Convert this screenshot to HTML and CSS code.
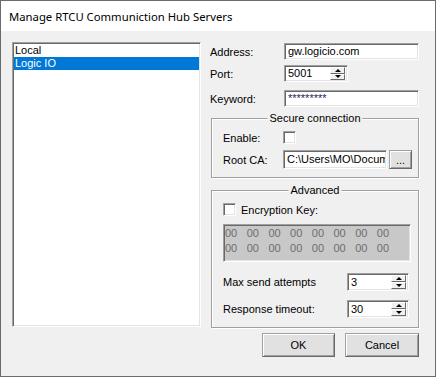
FILE: index.html
```html
<!DOCTYPE html>
<html>
<head>
<meta charset="utf-8">
<link rel="stylesheet" href="styles.css">
</head>
<body>
<div class="window">
  <div class="titlebar">Manage RTCU Communiction Hub Servers</div>
  <div class="body">
    <div class="main">
      <div class="listbox">
        <div class="item">Local</div>
        <div class="item selected">Logic IO</div>
      </div>
      <div class="panel">
        <div class="row r-address"><span class="label">Address:</span><div class="textbox wide">gw.logicio.com</div></div>
        <div class="row r-port"><span class="label">Port:</span>
          <div class="textbox spin port"><span class="val">5001</span><span class="spinbtns"><span class="sb up"></span><span class="sb down"></span></span></div>
        </div>
        <div class="row r-keyword"><span class="label">Keyword:</span><div class="textbox wide pw">*********</div></div>

        <div class="group secure">
          <div class="group-title">Secure connection</div>
          <div class="grow enable"><span class="glabel">Enable:</span><span class="checkbox"></span></div>
          <div class="grow rootca"><span class="glabel">Root CA:</span><div class="textbox path"><span class="clip">C:\Users\MO\Docum</span></div><button class="btn small">...</button></div>
        </div>

        <div class="group advanced">
          <div class="group-title">Advanced</div>
          <div class="grow enc"><span class="checkbox"></span><span class="enc-label">Encryption Key:</span></div>
          <div class="textbox keybox">00 00 00 00 00 00 00 00<br>00 00 00 00 00 00 00 00</div>
          <div class="grow num r-max"><span class="nlabel">Max send attempts</span>
            <div class="textbox spin nspin"><span class="val">3</span><span class="spinbtns"><span class="sb up"></span><span class="sb down"></span></span></div>
          </div>
          <div class="grow num r-resp"><span class="nlabel">Response timeout:</span>
            <div class="textbox spin nspin"><span class="val">30</span><span class="spinbtns"><span class="sb up"></span><span class="sb down"></span></span></div>
          </div>
        </div>
      </div>
    </div>
    <div class="buttons">
      <button class="btn ok">OK</button>
      <button class="btn cancel">Cancel</button>
    </div>
  </div>
</div>
</body>
</html>
```
FILE: styles.css
```css
* { box-sizing: border-box; }
body {
  margin: 0;
  font-family: "Liberation Sans", Arial, sans-serif;
  font-size: 11px;
  color: #000;
}
.window {
  width: 436px;
  height: 377px;
  border: 1px solid #6b6b6b;
  background: #f0f0f0;
  display: flex;
  flex-direction: column;
}
.titlebar {
  height: 30px;
  flex: none;
  background: #fff;
  padding-left: 8px;
  display: flex;
  align-items: center;
  font-family: "Noto Sans", sans-serif;
  font-size: 11.3px;
  color: #000;
}
.body {
  flex: 1;
  padding: 11px 16px 0 11px;
  display: flex;
  flex-direction: column;
}
.main {
  display: flex;
  align-items: flex-start;
}
.listbox {
  width: 189px;
  height: 285px;
  background: #fff;
  border: 1px solid;
  border-color: #a0a0a0 #fff #fff #a0a0a0;
  box-shadow: inset 1px 1px #696969, inset -1px -1px #e3e3e3;
  padding: 1px;
}
.item {
  height: 13px;
  line-height: 13px;
  padding-left: 1px;
  white-space: nowrap;
}
.item.selected {
  background: #0078d7;
  color: #fff;
}
.panel {
  margin-left: 9px;
  width: 209px;
  padding-top: 1px;
  display: flex;
  flex-direction: column;
}
.row {
  display: flex;
  align-items: center;
  height: 17px;
}
.r-port { margin-top: 5px; }
.r-keyword { margin-top: 8px; }
.label { width: 74px; flex: none; }
.textbox {
  height: 17px;
  background: #fff;
  border: 1px solid;
  border-color: #a0a0a0 #fff #fff #a0a0a0;
  box-shadow: inset 1px 1px #696969, inset -1px -1px #e3e3e3;
  padding: 0 3px;
  line-height: 15px;
  overflow: hidden;
  white-space: nowrap;
}
.wide { width: 135px; }
.pw { color: #1b2a5a; }
.spin {
  display: flex;
  align-items: stretch;
  padding: 1px 2px 1px 3px;
  line-height: 13px;
}
.spin .val { flex: 1; }
.port { width: 64px; height: 17px; }
.spinbtns {
  width: 15px;
  display: flex;
  flex-direction: column;
}
.sb {
  flex: 1;
  background: #f0f0f0;
  border: 1px solid;
  border-color: #fff #696969 #696969 #fff;
  display: flex;
  align-items: center;
  justify-content: center;
}
.sb::after {
  content: "";
  width: 0;
  height: 0;
  border-left: 3px solid transparent;
  border-right: 3px solid transparent;
}
.sb.up::after { border-bottom: 3px solid #000; }
.sb.down::after { border-top: 3px solid #000; }

.group {
  position: relative;
  margin-left: 1px;
  width: 208px;
  border: 1px solid #a0a0a0;
  box-shadow: inset 1px 1px #fff, 1px 1px #fff;
  padding-left: 11px;
}
.group-title {
  position: absolute;
  top: -7px;
  left: 50%;
  transform: translateX(-50%);
  background: #f0f0f0;
  padding: 0 2px;
  line-height: 13px;
  white-space: nowrap;
}
.grow {
  display: flex;
  align-items: center;
}
.secure {
  margin-top: 11px;
  height: 60px;
  padding-top: 12px;
}
.enable { height: 13px; }
.glabel { width: 60px; flex: none; }
.checkbox {
  width: 13px;
  height: 13px;
  flex: none;
  background: #fff;
  border: 1px solid;
  border-color: #a0a0a0 #fff #fff #a0a0a0;
  box-shadow: inset 1px 1px #696969, inset -1px -1px #e3e3e3;
}
.rootca { margin-top: 6px; height: 19px; }
.path {
  width: 104px;
  height: 19px;
  line-height: 17px;
  padding: 0 1px 0 3px;
}
.clip {
  display: block;
  overflow: hidden;
  white-space: nowrap;
}
.btn {
  font-family: "Liberation Sans", Arial, sans-serif;
  font-size: 11px;
  color: #000;
  background: #e1e1e1;
  border: 1px solid;
  border-color: #a0a0a0 #696969 #696969 #a0a0a0;
  box-shadow: inset 1px 1px #fff, inset -1px -1px #a0a0a0;
  padding: 0;
  margin: 0;
}
.small {
  width: 23px;
  height: 19px;
  margin-left: 2px;
  line-height: 15px;
  padding-top: 2px;
}
.advanced {
  margin-top: 12px;
  height: 138px;
  padding-top: 12px;
}
.enc { height: 13px; }
.enc-label { margin-left: 5px; }
.keybox {
  margin-top: 8px;
  width: 188px;
  height: 38px;
  background: #c8c8c8;
  color: #6d6d6d;
  padding: 1px 1px;
  line-height: 15px;
  word-spacing: 6.4px;
}
.num { height: 18px; }
.r-max { margin-top: 11px; }
.r-resp { margin-top: 9px; }
.nlabel { width: 124px; flex: none; }
.nspin { width: 62px; height: 18px; line-height: 14px; }

.buttons {
  margin-top: 5px;
  display: flex;
  justify-content: flex-end;
  gap: 10px;
}
.ok { width: 73px; height: 24px; }
.cancel { width: 74px; height: 24px; }
```
